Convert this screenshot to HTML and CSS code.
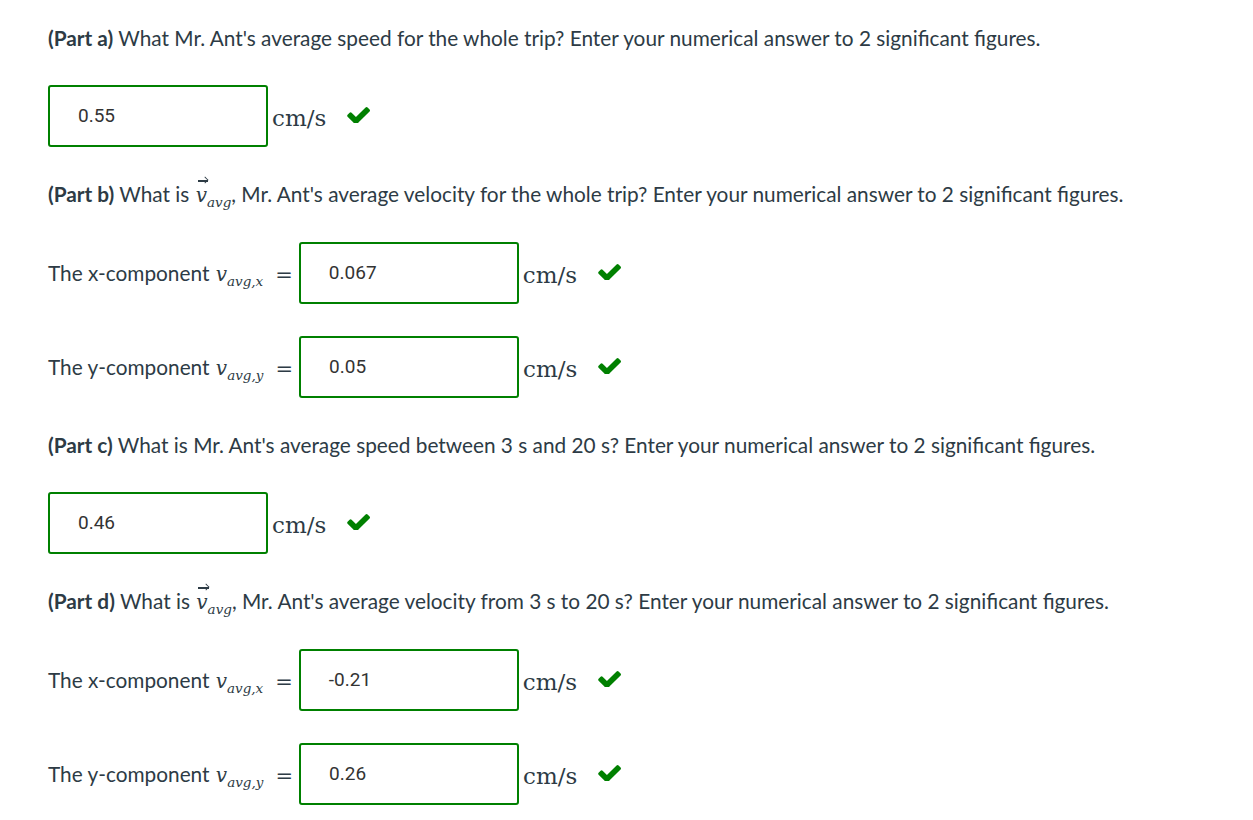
FILE: index.html
```html
<!DOCTYPE html>
<html>
<head>
<meta charset="utf-8">
<link rel="stylesheet" href="styles.css">
</head>
<body>
<main class="quiz">
  <p class="q"><b>(Part a)</b> What Mr. Ant's average speed for the whole trip? Enter your numerical answer to 2 significant figures.</p>
  <div class="row">
    <div class="box">0.55</div>
    <span class="unit">cm/s</span>
    <svg class="check" viewBox="109 360 1562 1030" width="23" height="16"><path d="M1671 566q0 40-28 68l-724 724-136 136q-28 28-68 28t-68-28l-136-136-362-362q-28-28-28-68t28-68l136-136q28-28 68-28t68 28l294 295 656-657q28-28 68-28t68 28l136 136q28 28 28 68z" fill="#008000"/></svg>
  </div>

  <p class="q"><b>(Part b)</b> What is <span class="m"><span class="vec">v</span><sub>avg</sub></span>, Mr. Ant's average velocity for the whole trip? Enter your numerical answer to 2 significant figures.</p>
  <div class="row">
    <span class="label">The x-component <span class="m">v<sub>avg,x</sub></span></span>
    <span class="eq">=</span>
    <div class="box">0.067</div>
    <span class="unit">cm/s</span>
    <svg class="check" viewBox="109 360 1562 1030" width="23" height="16"><path d="M1671 566q0 40-28 68l-724 724-136 136q-28 28-68 28t-68-28l-136-136-362-362q-28-28-28-68t28-68l136-136q28-28 68-28t68 28l294 295 656-657q28-28 68-28t68 28l136 136q28 28 28 68z" fill="#008000"/></svg>
  </div>
  <div class="row">
    <span class="label">The y-component <span class="m">v<sub>avg,y</sub></span></span>
    <span class="eq">=</span>
    <div class="box">0.05</div>
    <span class="unit">cm/s</span>
    <svg class="check" viewBox="109 360 1562 1030" width="23" height="16"><path d="M1671 566q0 40-28 68l-724 724-136 136q-28 28-68 28t-68-28l-136-136-362-362q-28-28-28-68t28-68l136-136q28-28 68-28t68 28l294 295 656-657q28-28 68-28t68 28l136 136q28 28 28 68z" fill="#008000"/></svg>
  </div>

  <p class="q"><b>(Part c)</b> What is Mr. Ant's average speed between 3 s and 20 s? Enter your numerical answer to 2 significant figures.</p>
  <div class="row">
    <div class="box">0.46</div>
    <span class="unit">cm/s</span>
    <svg class="check" viewBox="109 360 1562 1030" width="23" height="16"><path d="M1671 566q0 40-28 68l-724 724-136 136q-28 28-68 28t-68-28l-136-136-362-362q-28-28-28-68t28-68l136-136q28-28 68-28t68 28l294 295 656-657q28-28 68-28t68 28l136 136q28 28 28 68z" fill="#008000"/></svg>
  </div>

  <p class="q"><b>(Part d)</b> What is <span class="m"><span class="vec">v</span><sub>avg</sub></span>, Mr. Ant's average velocity from 3 s to 20 s? Enter your numerical answer to 2 significant figures.</p>
  <div class="row">
    <span class="label">The x-component <span class="m">v<sub>avg,x</sub></span></span>
    <span class="eq">=</span>
    <div class="box">-0.21</div>
    <span class="unit">cm/s</span>
    <svg class="check" viewBox="109 360 1562 1030" width="23" height="16"><path d="M1671 566q0 40-28 68l-724 724-136 136q-28 28-68 28t-68-28l-136-136-362-362q-28-28-28-68t28-68l136-136q28-28 68-28t68 28l294 295 656-657q28-28 68-28t68 28l136 136q28 28 28 68z" fill="#008000"/></svg>
  </div>
  <div class="row">
    <span class="label">The y-component <span class="m">v<sub>avg,y</sub></span></span>
    <span class="eq">=</span>
    <div class="box">0.26</div>
    <span class="unit">cm/s</span>
    <svg class="check" viewBox="109 360 1562 1030" width="23" height="16"><path d="M1671 566q0 40-28 68l-724 724-136 136q-28 28-68 28t-68-28l-136-136-362-362q-28-28-28-68t28-68l136-136q28-28 68-28t68 28l294 295 656-657q28-28 68-28t68 28l136 136q28 28 28 68z" fill="#008000"/></svg>
  </div>
</main>
</body>
</html>
```

FILE: styles.css
```css
html, body {
  margin: 0;
  background: #ffffff;
}
body {
  font-family: "Lato", "Noto Sans", sans-serif;
  color: #2d3b45;
}
.quiz {
  display: flex;
  flex-direction: column;
  gap: 32px;
  padding: 23px 48px 0 48px;
}
.q {
  margin: 0;
  font-size: 20.8px;
  line-height: 30px;
  white-space: nowrap;
}
.q b {
  font-weight: 700;
}
.row {
  display: flex;
  align-items: center;
  height: 62px;
}
.label {
  font-size: 20.8px;
  white-space: nowrap;
}
.m {
  font-family: "DejaVu Serif", "Liberation Serif", serif;
  font-style: italic;
  font-size: 20px;
  white-space: nowrap;
  margin-left: 1px;
}
.m sub {
  font-size: 13.5px;
  vertical-align: -5px;
  line-height: 0;
}
.vec {
  position: relative;
  display: inline-block;
}
.vec::before {
  content: "";
  position: absolute;
  left: 2px;
  right: -1px;
  top: 0px;
  height: 1.5px;
  background: #2d3b45;
}
.vec::after {
  content: "";
  position: absolute;
  right: -1px;
  top: -3px;
  width: 5px;
  height: 5px;
  border-top: 1.5px solid #2d3b45;
  border-right: 1.5px solid #2d3b45;
  transform: rotate(45deg) scale(0.8);
}
.eq {
  font-family: "DejaVu Serif", "Liberation Serif", serif;
  font-size: 21px;
  margin: 0 6px 0 12px;
  padding-top: 4px;
}
.box {
  box-sizing: border-box;
  width: 220px;
  height: 62px;
  border: 2px solid #008000;
  border-radius: 3px;
  padding-left: 28px;
  display: flex;
  align-items: center;
  font-family: "Roboto", "Liberation Sans", sans-serif;
  font-size: 19px;
  color: #333333;
  padding-bottom: 2px;
}
.unit {
  font-family: "DejaVu Serif", "Liberation Serif", serif;
  font-size: 23px;
  margin-left: 4px;
  color: #2d3b45;
  padding-top: 4px;
}
.check {
  margin-left: 21px;
  margin-top: -2px;
}
```
